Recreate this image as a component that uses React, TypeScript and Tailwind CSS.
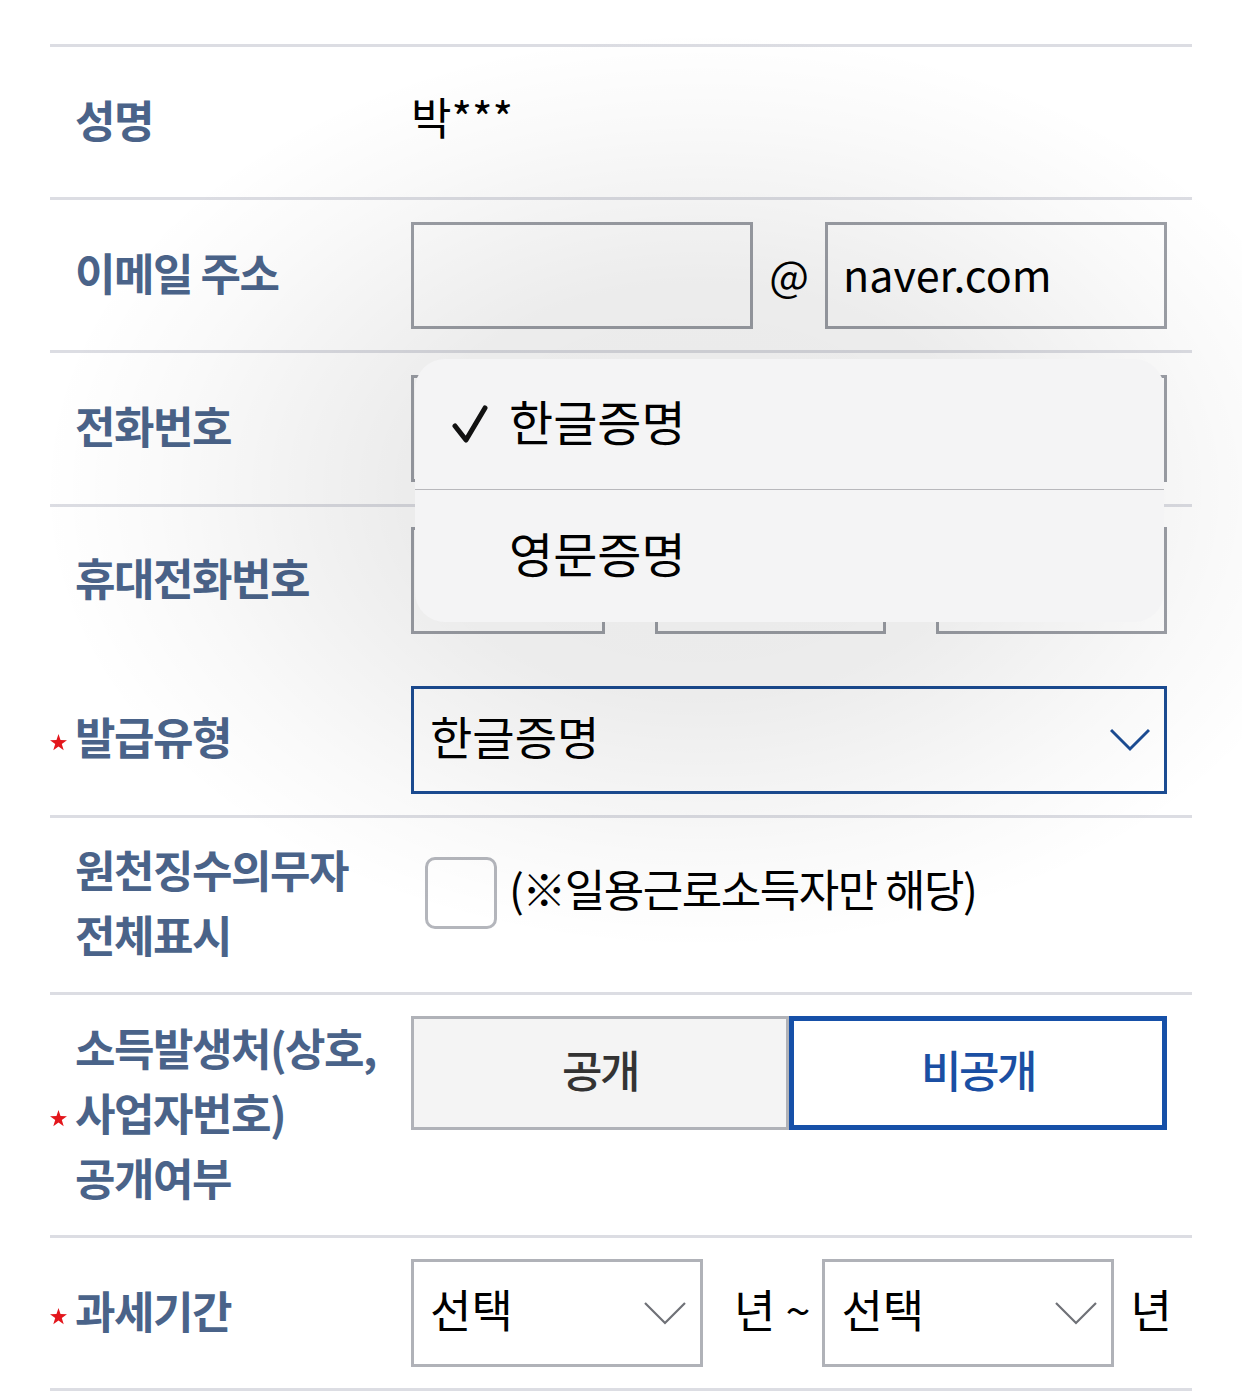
import { type ReactNode } from "react";

const Star = () => (
  <svg width="17" height="17" viewBox="0 0 16 16" className="shrink-0 mt-[6px]">
    <polygon
      points="8,0 9.9,5.6 16,5.8 11.1,9.4 12.9,15.2 8,11.8 3.1,15.2 4.9,9.4 0,5.8 6.1,5.6"
      fill="#e3161c"
    />
  </svg>
);

const Chevron = ({ blue }: { blue?: boolean }) =>
  blue ? (
    <svg width="40" height="24" viewBox="0 0 40 24" fill="none">
      <polyline points="1,2 20,21 39,2" stroke="#1b4c93" strokeWidth="3" />
    </svg>
  ) : (
    <svg width="42" height="24" viewBox="0 0 42 24" fill="none">
      <polyline points="1,2 21,22 41,2" stroke="#6f7177" strokeWidth="2.2" />
    </svg>
  );

const Label = ({ children, required }: { children: ReactNode; required?: boolean }) => (
  <div className="w-[361px] shrink-0 flex items-center">
    <div className="w-[25px] flex justify-start">{required && <Star />}</div>
    <div className="text-[44px] font-bold tracking-[-1.5px] leading-[65px] text-[#4a6389] -mt-[6px]">
      {children}
    </div>
  </div>
);

export default function App() {
  return (
    <div className="relative min-h-[1396px] bg-white overflow-hidden font-['Noto_Sans_CJK_KR',sans-serif] text-black">
      <div className="px-[50px] pt-[44px]">
        <div className="border-t-[3px] border-[#dcdde3]">
          {/* 성명 */}
          <div className="h-[153px] border-b-[3px] border-[#dcdde3] flex items-center">
            <Label>성명</Label>
            <div className="text-[44px] leading-none -mt-[12px]">박***</div>
          </div>

          {/* 이메일 */}
          <div className="h-[153px] border-b-[3px] border-[#dcdde3] flex items-center">
            <Label>이메일 주소</Label>
            <div className="flex-1 pr-[25px] flex items-center">
              <div className="w-[342px] h-[107px] border-[3px] border-[#9c9fa6]" />
              <div className="w-[72px] text-center text-[42px] -mt-[4px]">@</div>
              <div className="w-[342px] h-[107px] border-[3px] border-[#9c9fa6] flex items-center pl-[15px] text-[43px]">
                <span className="-mt-[4px]">naver.com</span>
              </div>
            </div>
          </div>

          {/* 전화번호 */}
          <div className="h-[154px] border-b-[3px] border-[#dcdde3] flex items-center">
            <Label>전화번호</Label>
            <div className="flex-1 pr-[25px] flex items-center">
              <div className="w-[194px] h-[107px] border-[3px] border-[#9c9fa6]" />
              <div className="w-[50px]" />
              <div className="w-[231px] h-[107px] border-[3px] border-[#9c9fa6]" />
              <div className="w-[50px]" />
              <div className="w-[231px] h-[107px] border-[3px] border-[#9c9fa6]" />
            </div>
          </div>

          {/* 휴대전화번호 + 발급유형 */}
          <div className="h-[311px] border-b-[3px] border-[#dcdde3] pt-[20px]">
            <div className="h-[107px] flex items-center">
              <Label>휴대전화번호</Label>
              <div className="flex-1 pr-[25px] flex items-center">
                <div className="w-[194px] h-[107px] border-[3px] border-[#9c9fa6]" />
                <div className="w-[50px]" />
                <div className="w-[231px] h-[107px] border-[3px] border-[#9c9fa6]" />
                <div className="w-[50px]" />
                <div className="w-[231px] h-[107px] border-[3px] border-[#9c9fa6]" />
              </div>
            </div>
            <div className="h-[107px] mt-[52px] flex items-center">
              <Label required>발급유형</Label>
              <div className="flex-1 pr-[25px]">
                <div className="h-[108px] border-[3px] border-[#1b4c93] flex items-center justify-between pl-[16px] pr-[14px]">
                  <span className="text-[46px] -mt-[8px]">한글증명</span>
                  <Chevron blue />
                </div>
              </div>
            </div>
          </div>

          {/* 원천징수의무자 */}
          <div className="h-[177px] border-b-[3px] border-[#dcdde3] flex">
            <Label>
              원천징수의무자
              <br />
              전체표시
            </Label>
            <div className="flex-1 pr-[25px] pt-[39px] flex items-start">
              <div className="ml-[14px] w-[72px] h-[72px] rounded-[10px] border-[3px] border-[#b4b6bc] bg-white shrink-0" />
              <div className="ml-[12px] text-[44px] tracking-[-1.5px] leading-[66px] -mt-[2px] whitespace-nowrap">
                (※일용근로소득자만 해당)
              </div>
            </div>
          </div>

          {/* 소득발생처 */}
          <div className="h-[243px] border-b-[3px] border-[#dcdde3] flex">
            <Label required>
              소득발생처(상호,
              <br />
              사업자번호)
              <br />
              공개여부
            </Label>
            <div className="flex-1 pr-[25px] pt-[21px] flex items-start">
              <div className="w-[378px] h-[114px] border-[3px] border-[#b0b2b8] bg-[#f4f4f4] flex items-center justify-center text-[44px] tracking-[-2.5px] font-medium text-[#333]">
                <span className="-mt-[8px]">공개</span>
              </div>
              <div className="w-[378px] h-[114px] border-[5px] border-[#1650a8] bg-white flex items-center justify-center text-[44px] tracking-[-2.5px] font-medium text-[#1b4fa3]">
                <span className="-mt-[8px]">비공개</span>
              </div>
            </div>
          </div>

          {/* 과세기간 */}
          <div className="h-[153px] border-b-[3px] border-[#dcdde3] flex items-center">
            <Label required>과세기간</Label>
            <div className="flex-1 pr-[25px] flex items-center text-[45px]">
              <div className="w-[292px] h-[108px] border-[3px] border-[#b0b2b8] bg-white flex items-center justify-between pl-[16px] pr-[14px]">
                <span className="-mt-[8px]">선택</span>
                <Chevron />
              </div>
              <span className="ml-[31px] -mt-[8px] whitespace-nowrap">년 ~</span>
              <div className="ml-[12px] w-[292px] h-[108px] border-[3px] border-[#b0b2b8] bg-white flex items-center justify-between pl-[16px] pr-[14px]">
                <span className="-mt-[8px]">선택</span>
                <Chevron />
              </div>
              <span className="ml-[16px] -mt-[8px]">년</span>
            </div>
          </div>
        </div>
      </div>

      {/* dim behind the popup menu */}
      <div className="pointer-events-none absolute inset-0 bg-[radial-gradient(ellipse_660px_460px_at_700px_490px,rgba(0,0,0,0.085)_0%,rgba(0,0,0,0.075)_45%,rgba(0,0,0,0.025)_80%,rgba(0,0,0,0)_100%)]" />

      {/* dropdown popup */}
      <div className="absolute left-[415px] top-[359px] w-[749px] h-[263px] rounded-[30px] bg-[#f4f4f5] flex flex-col">
        <div className="h-[131px] flex items-center border-b border-[#b8b8bc]">
          <svg width="36" height="38" viewBox="0 0 36 38" className="ml-[37px]" fill="none">
            <polyline
              points="3,21 14,35 33,3"
              stroke="#111"
              strokeWidth="5"
              strokeLinecap="round"
              strokeLinejoin="round"
            />
          </svg>
          <span className="ml-[21px] text-[48px] -mt-[8px]">한글증명</span>
        </div>
        <div className="flex-1 flex items-center">
          <span className="ml-[94px] text-[48px] -mt-[8px]">영문증명</span>
        </div>
      </div>
    </div>
  );
}
